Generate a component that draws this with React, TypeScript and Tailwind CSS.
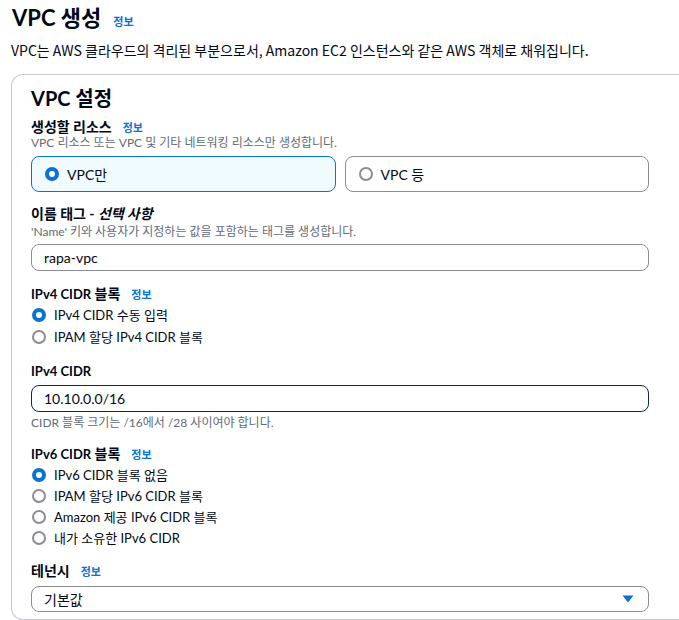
import React from "react";

function Info() {
  return <span className="ml-[11px] text-[11px] font-bold text-[#0972d3] leading-[16px]">정보</span>;
}

function L({ children }: { children: React.ReactNode }) {
  return <span className="text-[13px]">{children}</span>;
}

function Radio({ checked }: { checked?: boolean }) {
  return checked ? (
    <span className="inline-block w-[14px] h-[14px] rounded-full border-[4px] border-[#0972d3] bg-white shrink-0" />
  ) : (
    <span className="inline-block w-[14px] h-[14px] rounded-full border-[2px] border-[#8c8c94] bg-white shrink-0" />
  );
}

function RadioRow({ checked, label, h }: { checked?: boolean; label: string; h: string }) {
  return (
    <div className={`flex items-center gap-[8px] pl-[1px] ${h}`}>
      <Radio checked={checked} />
      <span className="text-[13px] leading-[16px] text-[#000716]">{label}</span>
    </div>
  );
}

function Label({ children, info, mt }: { children: React.ReactNode; info?: boolean; mt: string }) {
  return (
    <div className={`${mt} h-[16px] flex items-baseline`}>
      <span className="text-[14px] font-bold leading-[16px]">{children}</span>
      {info && <Info />}
    </div>
  );
}

function Desc({ children, mt }: { children: React.ReactNode; mt?: string }) {
  return <p className={`${mt ?? ""} h-[16px] text-[12px] leading-[16px] text-[#5f6b7a]`}>{children}</p>;
}

export default function App() {
  return (
    <div className="w-[679px] h-[620px] overflow-hidden bg-white text-[#000716] font-['Lato','Noto_Sans_CJK_KR',sans-serif]">
      <div className="pt-[3px] pl-[12px] h-[33px] flex items-baseline">
        <h1 className="text-[22px] font-bold leading-[30px]">VPC 생성</h1>
        <span className="ml-[12px] text-[11px] font-bold text-[#0972d3]">정보</span>
      </div>
      <p className="mt-[7px] h-[20px] pl-[11px] text-[14px] leading-[20px] font-['Noto_Sans_CJK_KR',sans-serif]">
        VPC는 AWS 클라우드의 격리된 부분으로서, Amazon EC2 인스턴스와 같은 AWS 객체로 채워집니다.
      </p>
      <div className="mt-[14px] ml-[11px] border border-r-0 border-[#c6c6cd] rounded-l-[12px] pl-[19px] pt-[11px] pb-[7px]">
        <h2 className="h-[24px] text-[20px] font-bold leading-[24px]">VPC 설정</h2>

        <Label mt="mt-[9px]" info>생성할 리소스</Label>
        <Desc>VPC 리소스 또는 VPC 및 기타 네트워킹 리소스만 생성합니다.</Desc>
        <div className="mt-[5px] w-[618px] grid grid-cols-2 gap-[9px]">
          <div className="h-[36px] flex items-center gap-[8px] pl-[13px] rounded-[8px] border border-[#0972d3] bg-[#f0fbff]">
            <Radio checked />
            <span className="text-[14px]">VPC만</span>
          </div>
          <div className="h-[36px] flex items-center gap-[8px] pl-[13px] rounded-[8px] border border-[#8c8c94] bg-white">
            <Radio />
            <span className="text-[14px]">VPC 등</span>
          </div>
        </div>

        <Label mt="mt-[14px]">
          이름 태그 - <span className="italic">선택 사항</span>
        </Label>
        <Desc mt="mt-[2px]">'Name' 키와 사용자가 지정하는 값을 포함하는 태그를 생성합니다.</Desc>
        <div className="mt-[4px] w-[618px] h-[27px] rounded-[8px] border border-[#8c8c94] flex items-center pl-[12px] text-[14px]">
          rapa-vpc
        </div>

        <Label mt="mt-[15px]" info>
          <L>IPv4 CIDR</L> 블록
        </Label>
        <div className="mt-[2px]">
          <RadioRow checked label="IPv4 CIDR 수동 입력" h="h-[22px]" />
          <RadioRow label="IPAM 할당 IPv4 CIDR 블록" h="h-[22px]" />
        </div>

        <Label mt="mt-[15px]">
          <L>IPv4 CIDR</L>
        </Label>
        <div className="mt-[6px] w-[618px] h-[27px] rounded-[8px] border border-[#0a2a5c] flex items-center pl-[12px] text-[14px]">
          10.10.0.0/16
        </div>
        <Desc mt="mt-[3px]">CIDR 블록 크기는 /16에서 /28 사이여야 합니다.</Desc>

        <Label mt="mt-[15px]" info>
          <L>IPv6 CIDR</L> 블록
        </Label>
        <div className="mt-[2px]">
          <RadioRow checked label="IPv6 CIDR 블록 없음" h="h-[21px]" />
          <RadioRow label="IPAM 할당 IPv6 CIDR 블록" h="h-[21px]" />
          <RadioRow label="Amazon 제공 IPv6 CIDR 블록" h="h-[21px]" />
          <RadioRow label="내가 소유한 IPv6 CIDR" h="h-[21px]" />
        </div>

        <Label mt="mt-[15px]" info>테넌시</Label>
        <div className="mt-[7px] w-[618px] h-[26px] rounded-[8px] border border-[#8c8c94] flex items-center justify-between pl-[12px] pr-[14px] text-[14px]">
          <span>기본값</span>
          <svg width="12" height="8" viewBox="0 0 12 8">
            <path d="M0.5 0.5 H11.5 L6 7.5 Z" fill="#0972d3" />
          </svg>
        </div>
      </div>
    </div>
  );
}
